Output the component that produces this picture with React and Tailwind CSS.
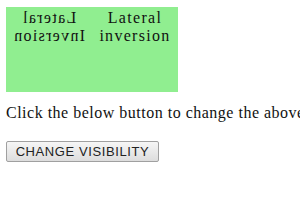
export default function App() {
  return (
    <div className="w-[300px] h-[210px] bg-white overflow-hidden pl-[6px] pt-[7px]" style={{fontFamily: '"Liberation Serif", serif'}}>
      <div className="w-[172px] h-[85px] bg-[#90ee90] flex text-[16px] leading-[18px] text-[#111] tracking-[1.3px] pt-[2px]">
        <div className="w-[86px] text-center -scale-x-100">Lateral Inversion</div>
        <div className="w-[86px] text-center">Lateral inversion</div>
      </div>
      <p className="mt-[12px] text-[16px] leading-[18px] text-[#111] whitespace-nowrap tracking-[0.5px]">Click the below button to change the above text visibility</p>
      <button className="mt-[19px] h-[21px] w-[153px] border border-[#a0a0a0] rounded-[2px] bg-gradient-to-b from-[#f6f6f6] to-[#dddddd] text-[13px] text-[#222] leading-none tracking-[0.6px]" style={{fontFamily: '"Liberation Sans", Arial, sans-serif'}}>
        CHANGE VISIBILITY
      </button>
    </div>
  );
}
